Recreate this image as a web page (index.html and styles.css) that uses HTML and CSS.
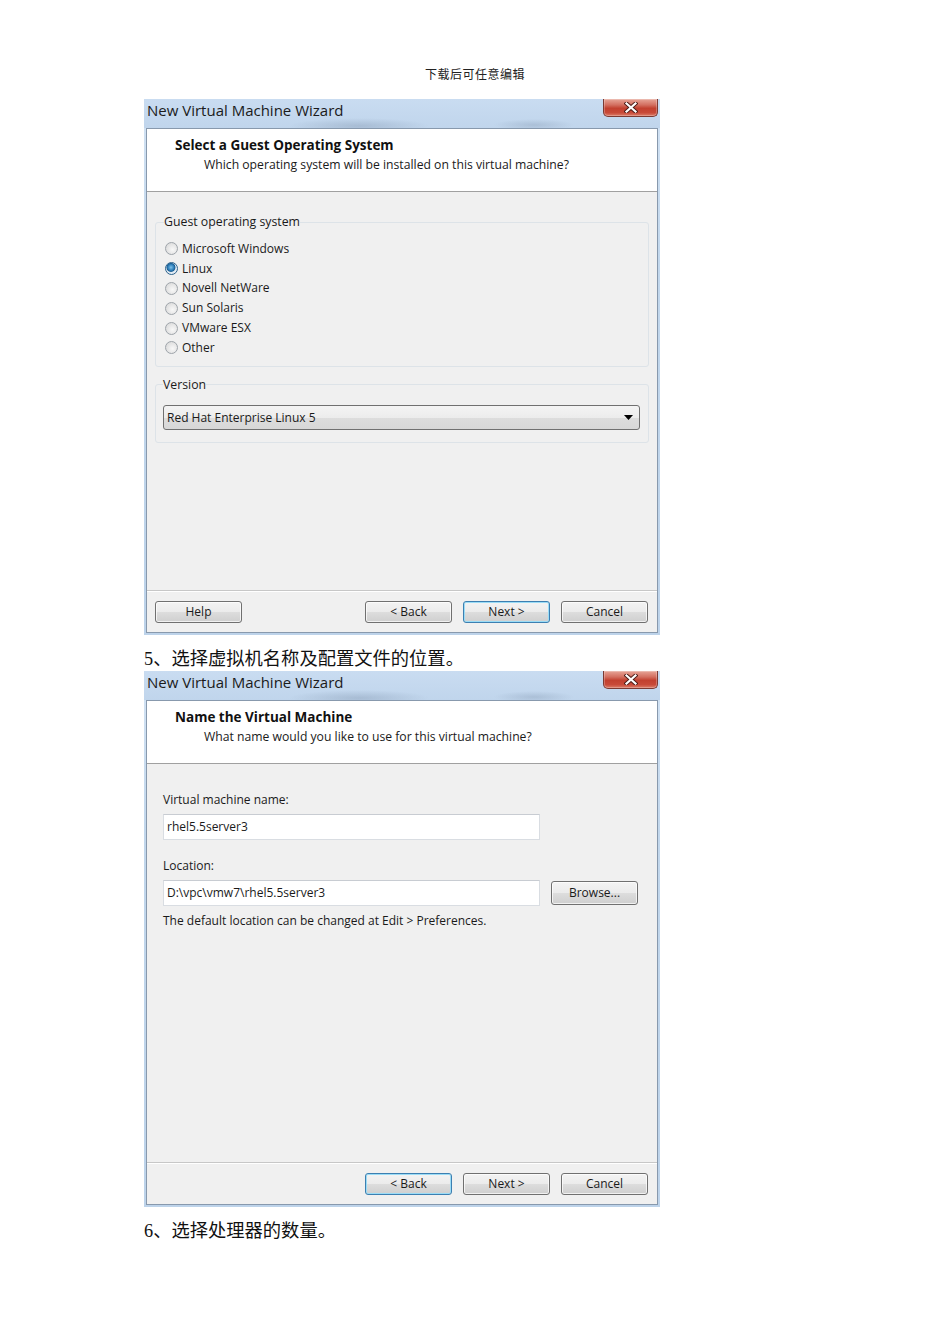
FILE: index.html
```html
<!DOCTYPE html>
<html>
<head>
<meta charset="utf-8">
<link rel="stylesheet" href="styles.css">
</head>
<body>
<div class="page">
  <div class="doc-header">下载后可任意编辑</div>

  <div class="dialog">
    <div class="titlebar">
      <span class="title">New Virtual Machine Wizard</span>
      <div class="close">
        <svg width="14" height="11" viewBox="0 0 14 11"><path d="M2.5 1.5 L11.5 9.5 M11.5 1.5 L2.5 9.5" stroke="#4a1a15" stroke-width="4" stroke-linecap="square"/><path d="M2.5 1.5 L11.5 9.5 M11.5 1.5 L2.5 9.5" stroke="#ffffff" stroke-width="2.2" stroke-linecap="square"/></svg>
      </div>
    </div>
    <div class="client">
      <div class="wiz-header">
        <div class="wiz-title">Select a Guest Operating System</div>
        <div class="wiz-sub">Which operating system will be installed on this virtual machine?</div>
      </div>
      <div class="wiz-body body-os">
        <fieldset class="group">
          <legend>Guest operating system</legend>
          <div class="radio-list">
            <div class="radio-row"><span class="radio"></span><span>Microsoft Windows</span></div>
            <div class="radio-row"><span class="radio checked"></span><span>Linux</span></div>
            <div class="radio-row"><span class="radio"></span><span>Novell NetWare</span></div>
            <div class="radio-row"><span class="radio"></span><span>Sun Solaris</span></div>
            <div class="radio-row"><span class="radio"></span><span>VMware ESX</span></div>
            <div class="radio-row"><span class="radio"></span><span>Other</span></div>
          </div>
        </fieldset>
        <fieldset class="group group-version">
          <legend>Version</legend>
          <div class="select">
            <span>Red Hat Enterprise Linux 5</span>
            <svg width="9" height="5" viewBox="0 0 9 5"><path d="M0 0 H9 L4.5 5 Z" fill="#000"/></svg>
          </div>
        </fieldset>
      </div>
      <div class="wiz-footer">
        <div class="btn">Help</div>
        <div class="btn-group">
          <div class="btn">&lt; Back</div>
          <div class="btn default">Next &gt;</div>
          <div class="btn">Cancel</div>
        </div>
      </div>
    </div>
  </div>

  <p class="caption">5、选择虚拟机名称及配置文件的位置。</p>

  <div class="dialog">
    <div class="titlebar">
      <span class="title">New Virtual Machine Wizard</span>
      <div class="close">
        <svg width="14" height="11" viewBox="0 0 14 11"><path d="M2.5 1.5 L11.5 9.5 M11.5 1.5 L2.5 9.5" stroke="#4a1a15" stroke-width="4" stroke-linecap="square"/><path d="M2.5 1.5 L11.5 9.5 M11.5 1.5 L2.5 9.5" stroke="#ffffff" stroke-width="2.2" stroke-linecap="square"/></svg>
      </div>
    </div>
    <div class="client">
      <div class="wiz-header">
        <div class="wiz-title">Name the Virtual Machine</div>
        <div class="wiz-sub">What name would you like to use for this virtual machine?</div>
      </div>
      <div class="wiz-body body-name">
        <div class="field-label">Virtual machine name:</div>
        <div class="input">rhel5.5server3</div>
        <div class="field-label loc-label">Location:</div>
        <div class="input-row">
          <div class="input">D:\vpc\vmw7\rhel5.5server3</div>
          <div class="btn browse">Browse...</div>
        </div>
        <div class="note">The default location can be changed at Edit &gt; Preferences.</div>
      </div>
      <div class="wiz-footer footer-right">
        <div class="btn-group">
          <div class="btn default">&lt; Back</div>
          <div class="btn">Next &gt;</div>
          <div class="btn">Cancel</div>
        </div>
      </div>
    </div>
  </div>

  <p class="caption">6、选择处理器的数量。</p>
</div>
</body>
</html>
```

FILE: styles.css
```css
html, body {
  margin: 0;
  padding: 0;
  background: #ffffff;
}

.page {
  width: 950px;
  padding: 65px 0 0 144px;
  box-sizing: border-box;
}

.doc-header {
  width: 662px;
  text-align: center;
  font-family: "Liberation Serif", "Noto Sans CJK SC", serif;
  font-size: 12px;
  line-height: 20px;
  color: #222;
  letter-spacing: 0.5px;
  margin-bottom: 14px;
}

.dialog {
  width: 516px;
  box-sizing: border-box;
  padding: 0 2px 2px;
  background: linear-gradient(180deg, #d3e3f4 0%, #c2d7ec 30%, #bdd3ea 100%);
  font-family: "Open Sans", sans-serif;
  color: #1a1a1a;
}

.titlebar {
  height: 29px;
  display: flex;
  justify-content: space-between;
  align-items: flex-start;
  background:
    radial-gradient(ellipse 70px 8px at 215px 27px, rgba(120,140,165,0.35), rgba(120,140,165,0) 100%),
    radial-gradient(ellipse 40px 6px at 390px 26px, rgba(120,140,165,0.3), rgba(120,140,165,0) 100%),
    linear-gradient(180deg, #c9dcf1 0%, #c0d5ec 100%);
  margin: 0 -2px;
  padding: 0 2px 0 3px;
}

.title {
  font-family: "Open Sans", sans-serif;
  font-size: 15px;
  line-height: 22px;
  color: #1b1b1b;
}

.close {
  width: 55px;
  height: 18px;
  box-sizing: border-box;
  border: 1px solid #7b3a33;
  border-top: none;
  border-radius: 0 0 5px 5px;
  background: linear-gradient(180deg, #e7a597 0%, #d36f60 35%, #c2402f 55%, #c84a38 80%, #dc7c68 100%);
  display: flex;
  align-items: center;
  justify-content: center;
  box-shadow: inset 0 0 0 1px rgba(255,255,255,0.25);
}

.client {
  border: 1px solid #8899ad;
  background: #f0f0f0;
}

.wiz-header {
  height: 62px;
  background: #ffffff;
  border-bottom: 1px solid #a0a0a0;
}

.wiz-title {
  font-weight: bold;
  font-size: 13.5px;
  line-height: 16px;
  padding: 8px 0 0 28px;
  color: #111;
}

.wiz-sub {
  font-size: 12.2px;
  line-height: 16px;
  padding: 4px 0 0 57px;
  color: #1a1a1a;
}

.wiz-body {
  height: 398px;
  box-sizing: border-box;
}

.body-os {
  padding: 22px 8px 0;
}

.group {
  margin: 0;
  padding: 0 8px 8px;
  border: 1px solid #dde3e8;
  border-radius: 3px;
  font-size: 12px;
}

.group legend {
  padding: 0;
  line-height: 16px;
  font-size: 12.3px;
  color: #1a1a1a;
}

.radio-list {
  padding-top: 9px;
}

.radio-row {
  height: 19.8px;
  display: flex;
  align-items: center;
  gap: 4px;
  padding-left: 1px;
  line-height: 16px;
}

.radio {
  width: 13px;
  height: 13px;
  box-sizing: border-box;
  border-radius: 50%;
  border: 1px solid #9ea4aa;
  background: radial-gradient(circle at 60% 60%, #f8f8f8 0%, #e8e8e8 45%, #d4d4d4 100%);
  flex: none;
}

.radio.checked {
  border-color: #2c628b;
  background: radial-gradient(circle at 45% 40%, #7ec3ea 0%, #2a7ab6 35%, #1d5f93 45%, #dfe9f2 55%, #f4f7fa 100%);
}

.group-version {
  margin-top: 10px;
  padding: 0 8px 12px 7px;
}

.select {
  margin-top: 12px;
  height: 25px;
  box-sizing: border-box;
  border: 1px solid #707070;
  border-radius: 3px;
  background: linear-gradient(180deg, #f4f4f4 0%, #ececec 50%, #dddddd 51%, #d7d7d7 100%);
  display: flex;
  align-items: center;
  justify-content: space-between;
  padding: 0 6px 0 3px;
  font-size: 12px;
}

.wiz-footer {
  height: 31px;
  border-top: 1px solid #c7c7c7;
  box-shadow: inset 0 1px 0 #ffffff;
  display: flex;
  justify-content: space-between;
  align-items: flex-start;
  padding: 10px 9px 0 8px;
}

.footer-right {
  justify-content: flex-end;
}

.btn-group {
  display: flex;
  gap: 11px;
}

.btn {
  width: 87px;
  height: 22px;
  box-sizing: border-box;
  border: 1px solid #707070;
  border-radius: 3px;
  background: linear-gradient(180deg, #f3f3f3 0%, #ebebeb 50%, #dddddd 51%, #cfcfcf 100%);
  box-shadow: inset 0 0 0 1px rgba(255,255,255,0.7);
  font-size: 12px;
  line-height: 20px;
  text-align: center;
  color: #1a1a1a;
}

.btn.default {
  border-color: #3c7fb1;
  box-shadow: inset 0 0 0 1px #9bdcf6;
}

.body-name {
  padding: 28px 0 0 16px;
  font-size: 12px;
}

.field-label {
  line-height: 16px;
}

.loc-label {
  margin-top: 18px;
}

.input {
  margin-top: 6px;
  width: 377px;
  height: 26px;
  box-sizing: border-box;
  background: #ffffff;
  border: 1px solid #d9dde2;
  border-top-color: #c8ccd2;
  padding: 0 3px;
  line-height: 24px;
  font-size: 12px;
}

.input-row {
  display: flex;
  align-items: flex-start;
  gap: 11px;
}

.browse {
  margin-top: 7px;
  height: 24px;
  line-height: 22px;
}

.note {
  margin-top: 7px;
  line-height: 16px;
}

.caption {
  margin: 0;
  padding-top: 12px;
  height: 36px;
  box-sizing: border-box;
  font-family: "Liberation Serif", "Noto Sans CJK SC", serif;
  font-size: 18.3px;
  line-height: 24px;
  color: #111;
}
```
